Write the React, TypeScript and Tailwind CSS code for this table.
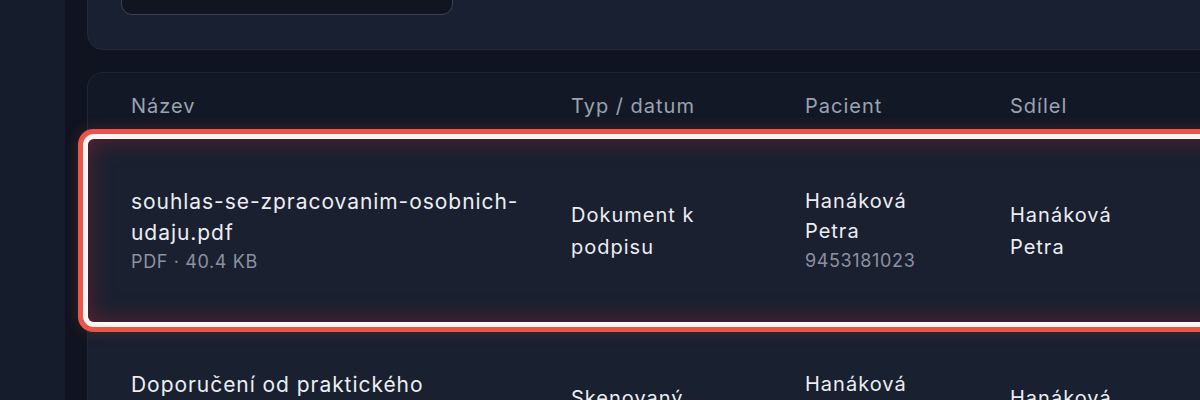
import type { ReactNode } from "react";

type Doc = {
  id: number;
  name: string;
  meta?: string;
  type: string;
  patient: string;
  patientId?: string;
  sharedBy: string;
  active?: boolean;
};

const docs: Doc[] = [
  {
    id: 1,
    name: "souhlas-se-zpracovanim-osobnich-udaju.pdf",
    meta: "PDF · 40.4 KB",
    type: "Dokument k podpisu",
    patient: "Hanáková Petra",
    patientId: "9453181023",
    sharedBy: "Hanáková Petra",
    active: true,
  },
  {
    id: 2,
    name: "Doporučení od praktického lékaře_kardiologie.pdf",
    meta: "PDF · 112.8 KB",
    type: "Skenovaný dokument",
    patient: "Hanáková Petra",
    patientId: "9453181023",
    sharedBy: "Hanáková Petra",
  },
];

const cols = "grid-cols-[440px_234px_205px_200px]";

const Cell = ({ children, wide }: { children: ReactNode; wide?: boolean }) => (
  <div className={wide ? "flex flex-col justify-center pr-[48px]" : "flex flex-col justify-center pr-[56px]"}>
    {children}
  </div>
);

const main = "text-[20px] tracking-[0.05em] text-[#eceef2]";
const sub = "text-[18px] tracking-[0.035em] text-[#8a92a1]";

const DocRow = ({ doc }: { doc: Doc }) => (
  <div
    className={
      doc.active
        ? `relative z-10 grid h-[183px] ${cols} rounded-[6px] bg-[#1a2030] pl-[43px] shadow-[0_0_0_5px_#fff5f4,0_0_0_10px_#ea5549,0_0_16px_10px_rgba(234,85,73,0.2),inset_0_0_24px_rgba(160,40,50,0.5)]`
        : `grid h-[183px] ${cols} bg-[#19202f] pl-[43px]`
    }
  >
    <Cell wide>
      <p className="text-[21px] leading-[31px] tracking-[0.045em] text-[#eceef2]">{doc.name}</p>
      {doc.meta && <p className={`${sub} leading-[28px]`}>{doc.meta}</p>}
    </Cell>
    <Cell>
      <p className={`${main} leading-[32px]`}>{doc.type}</p>
    </Cell>
    <Cell>
      <p className={`${main} leading-[30px]`}>{doc.patient}</p>
      {doc.patientId && <p className={`${sub} leading-[29px]`}>{doc.patientId}</p>}
    </Cell>
    <Cell>
      <p className={`${main} leading-[32px]`}>{doc.sharedBy}</p>
    </Cell>
  </div>
);

export default function App() {
  return (
    <div
      className="flex h-[400px] w-[1200px] overflow-hidden bg-[#0f1420]"
      style={{ fontFamily: "Inter, 'Noto Sans', sans-serif" }}
    >
      <aside className="h-full w-[65px] shrink-0 bg-[#151c2b]" />

      <main className="flex w-[1300px] shrink-0 flex-col gap-[22px] pl-[22px]">
        <section className="-mt-[61px] rounded-[16px] border border-[#232b3b] bg-[#182031] px-[33px] pb-[34px] pt-[20px]">
          <div className="h-[55px] w-[332px] rounded-[11px] border border-[#3a4354] bg-[#101521]" />
        </section>

        <section className="rounded-t-[16px] border-x border-t border-[#1f2737] bg-[#121826]">
          <div className={`grid h-[66px] ${cols} items-center pl-[43px] text-[20px] tracking-[0.05em] text-[#9ba3b1]`}>
            <span>Název</span>
            <span>Typ / datum</span>
            <span>Pacient</span>
            <span>Sdílel</span>
          </div>
          {docs.map((doc) => (
            <DocRow key={doc.id} doc={doc} />
          ))}
        </section>
      </main>
    </div>
  );
}
